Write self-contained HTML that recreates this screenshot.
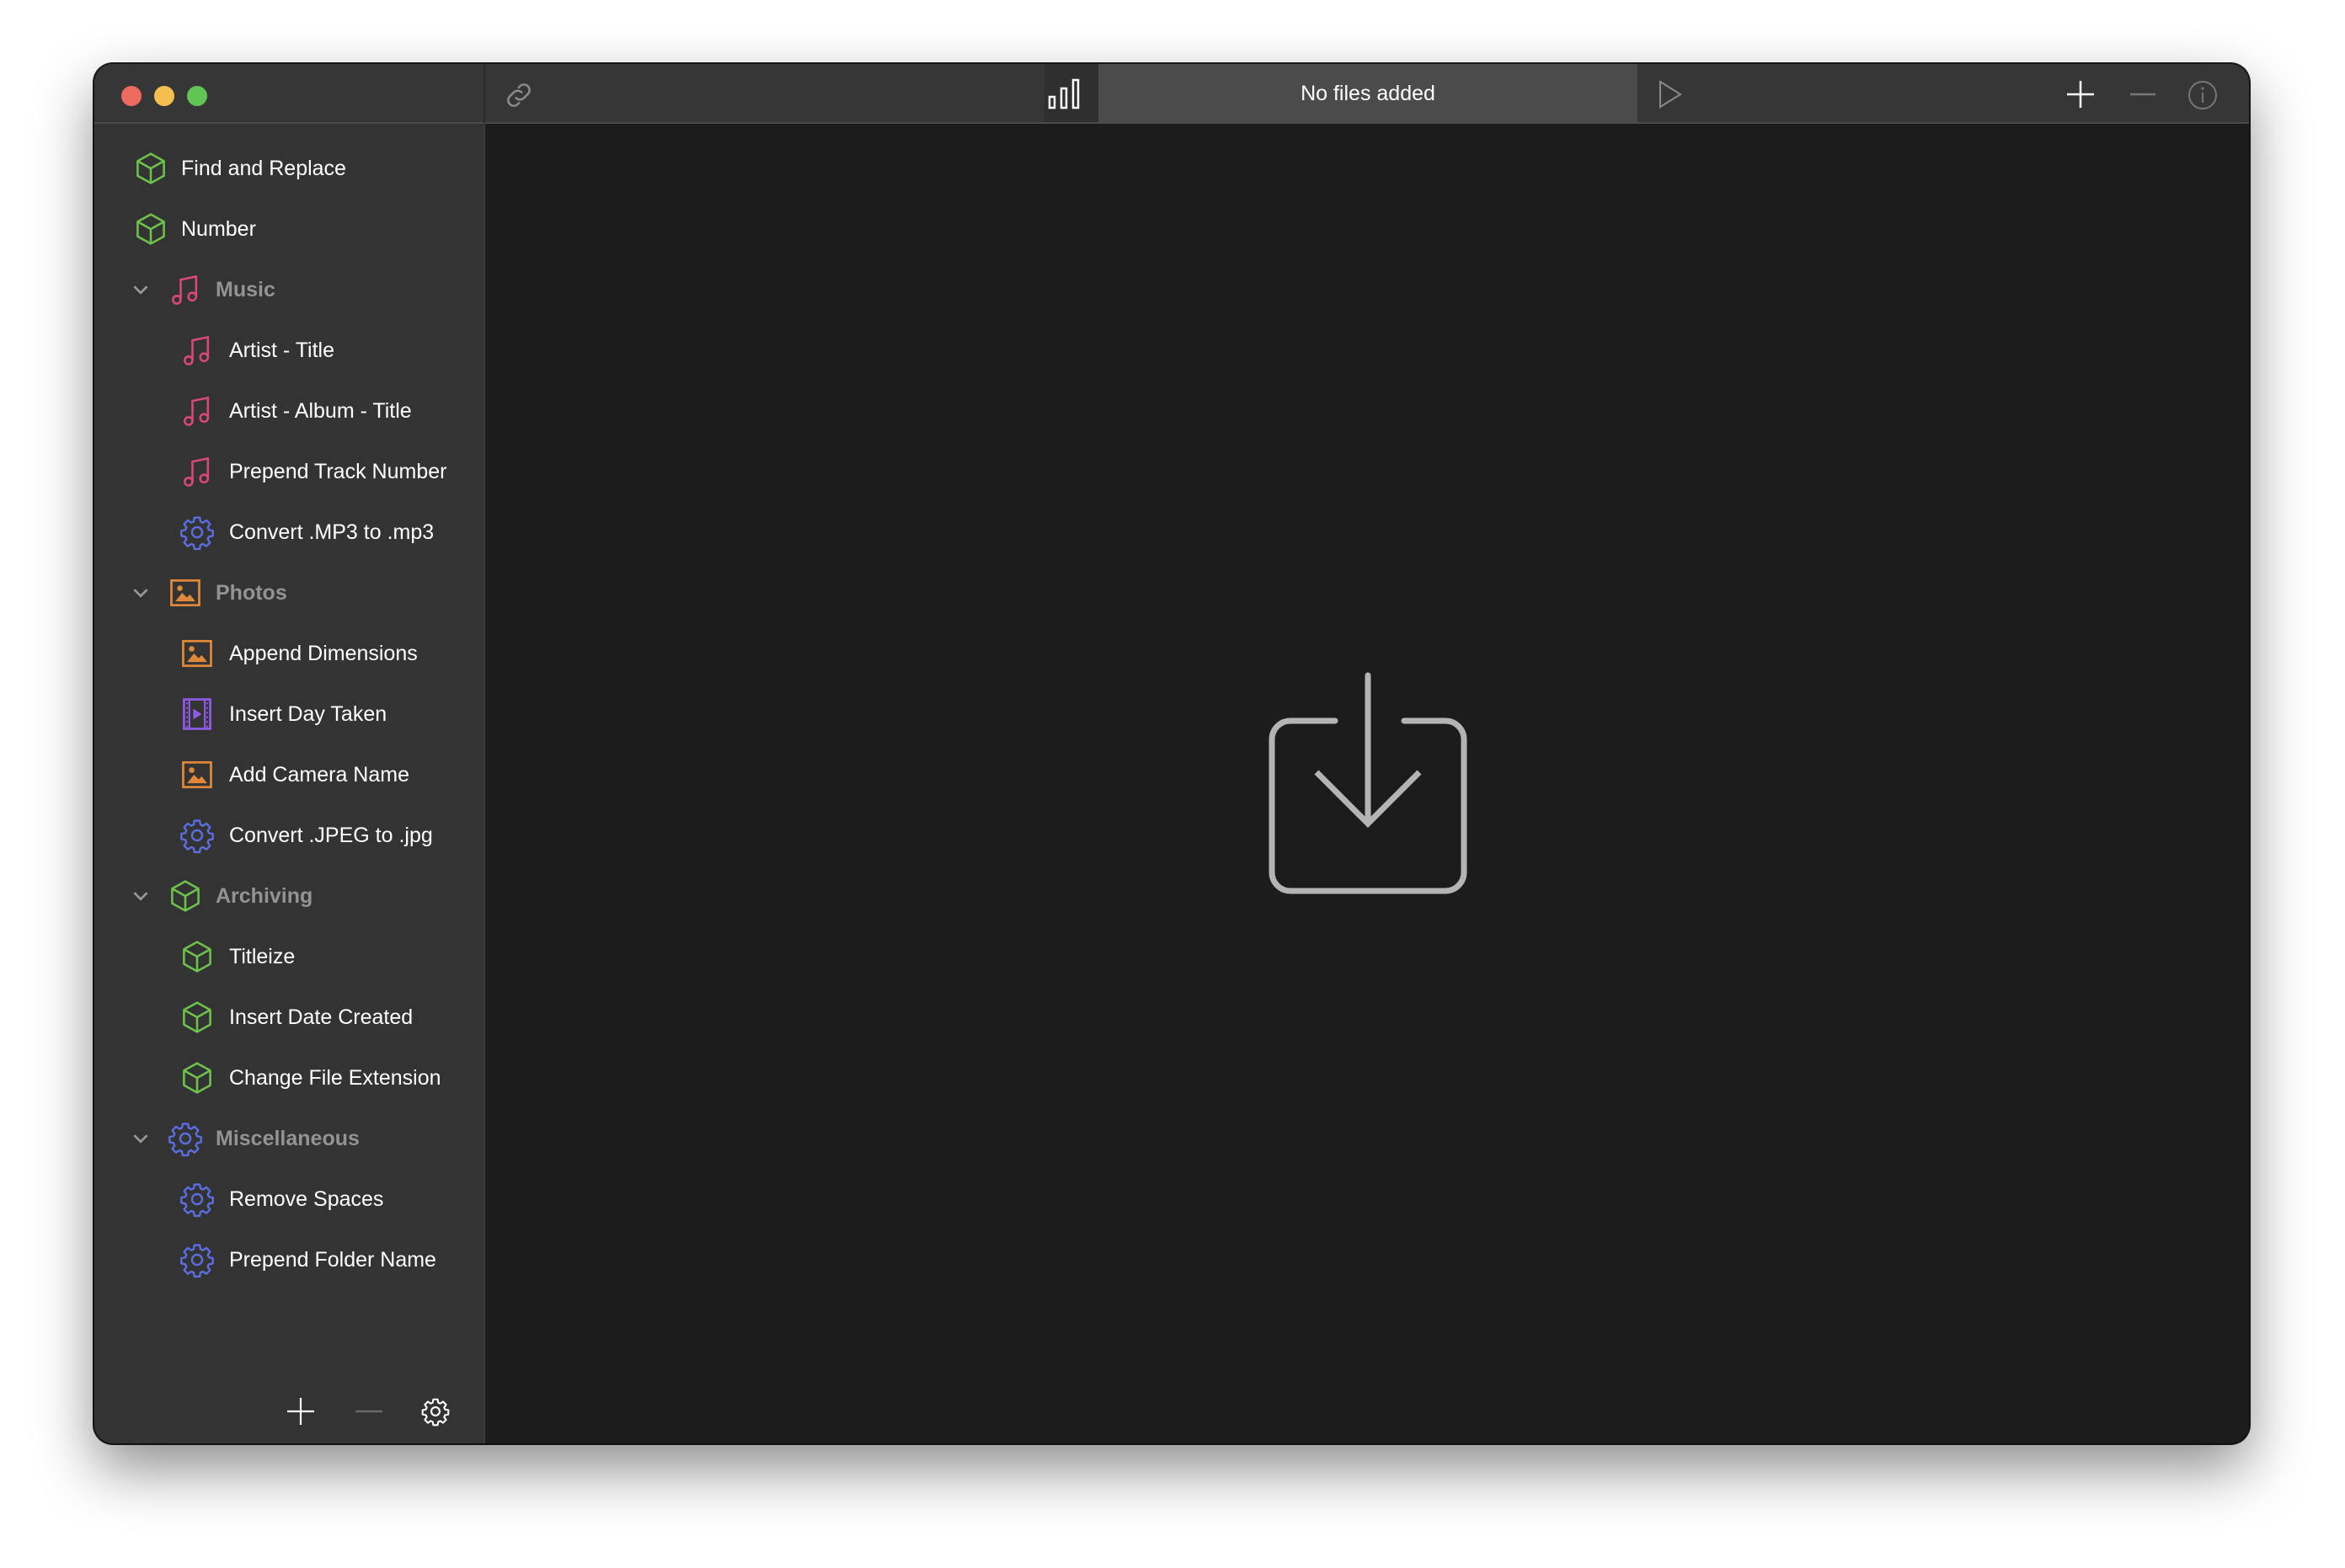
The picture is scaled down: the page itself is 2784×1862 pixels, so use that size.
<!DOCTYPE html>
<html><head><meta charset="utf-8"><style>
html,body{margin:0;padding:0;background:#fff;width:2784px;height:1862px;overflow:hidden;font-family:"Liberation Sans",sans-serif}
.win{position:absolute;left:112px;top:76px;width:2558px;height:1638px;border-radius:22px;background:#1c1c1c;overflow:hidden;box-shadow:0 30px 70px rgba(0,0,0,.45),0 0 0 2px #1a1a1a}
.tb{position:absolute;left:0;top:0;width:100%;height:69px;background:#363636;border-bottom:2px solid #4a4a4a}
.side{position:absolute;left:0;top:71px;width:462px;bottom:0;background:#333;border-right:2px solid #3c3c3c}
.sdiv{position:absolute;left:462px;top:0;width:2px;height:71px;background:#2a2a2a}
.dot{position:absolute;top:26px;width:24px;height:24px;border-radius:50%}
.row{position:absolute;height:40px;font-size:25px;line-height:40px;color:#fff;white-space:nowrap}
.row svg{position:absolute;top:0;left:0}
.ico{position:absolute;width:44px;height:44px;margin:-2px 0 0 -2px}
.hdr{color:#939393;font-weight:bold}
</style></head><body>
<svg width="0" height="0" style="position:absolute">
<defs>
<symbol id="cube" viewBox="0 0 24 24"><path d="M12 2.5L20.5 7.2V16.8L12 21.5L3.5 16.8V7.2Z M3.5 7.2L12 12L20.5 7.2 M12 12V21.5" fill="none" stroke="#6cc24a" stroke-width="1.4" stroke-linejoin="round"/></symbol>
<symbol id="music" viewBox="0 0 24 24"><g fill="none" stroke="#d9487a" stroke-width="1.4"><path d="M9 18.5V5.5L19 3.5V16.5"/><circle cx="6.5" cy="18.5" r="2.5"/><circle cx="16.5" cy="16.5" r="2.5"/></g></symbol>
<symbol id="photo" viewBox="0 0 24 24"><rect x="3" y="4" width="18" height="16" fill="none" stroke="#e0883a" stroke-width="1.5"/><circle cx="8.5" cy="9" r="1.8" fill="#e0883a"/><path d="M5.5 17.5L10 12L13 15L15 13L18.5 17.5Z" fill="#e0883a"/></symbol>
<symbol id="video" viewBox="0 0 24 24"><rect x="3.5" y="2.5" width="17" height="19" fill="none" stroke="#8f5ae6" stroke-width="1.5"/><path d="M7 3V21M17 3V21" stroke="#8f5ae6" stroke-width="1.2"/><path d="M5 5h1M5 8h1M5 11h1M5 14h1M5 17h1M5 20h1M18 5h1M18 8h1M18 11h1M18 14h1M18 17h1M18 20h1" stroke="#8f5ae6" stroke-width="1.2"/><path d="M9.5 8.5L15 12L9.5 15.5Z" fill="#8f5ae6"/></symbol>
<symbol id="gear" viewBox="0 0 24 24"><g fill="none" stroke="#5b6fe3" stroke-width="1.3"><path d="M10.3 2.5h3.4l.5 2.6 1.6.7 2.2-1.5 2.4 2.4-1.5 2.2.7 1.6 2.6.5v3.4l-2.6.5-.7 1.6 1.5 2.2-2.4 2.4-2.2-1.5-1.6.7-.5 2.6h-3.4l-.5-2.6-1.6-.7-2.2 1.5-2.4-2.4 1.5-2.2-.7-1.6-2.6-.5v-3.4l2.6-.5.7-1.6-1.5-2.2 2.4-2.4 2.2 1.5 1.6-.7Z" stroke-linejoin="round"/><circle cx="12" cy="12" r="3.3"/></g></symbol>
<symbol id="chev" viewBox="0 0 24 24"><path d="M5 8.5L12 15.5L19 8.5" fill="none" stroke="#9a9a9a" stroke-width="2.4"/></symbol>
</defs></svg>

<div class="win">
 <div class="tb"></div>
 <div class="sdiv"></div>
 <div class="dot" style="left:32px;background:#ed6a5e"></div>
 <div class="dot" style="left:71px;background:#f4bf4f"></div>
 <div class="dot" style="left:110px;background:#61c554"></div>
 <svg style="position:absolute;left:484px;top:17px" width="40" height="40" viewBox="0 0 24 24"><g fill="none" stroke="#8a8a8a" stroke-width="1.5" stroke-linecap="round"><path d="M10 14a4 4 0 0 0 5.6 0l3.2-3.2a4 4 0 0 0-5.6-5.6l-1.3 1.3"/><path d="M14 10a4 4 0 0 0-5.6 0l-3.2 3.2a4 4 0 0 0 5.6 5.6l1.3-1.3"/></g></svg>
 <div style="position:absolute;left:1128px;top:0;width:64px;height:69px;background:#2f2f2f"></div>
 <svg style="position:absolute;left:1131px;top:16px" width="44" height="40" viewBox="0 0 44 40"><g fill="none" stroke="#fff" stroke-width="2.5"><rect x="3" y="23" width="6" height="13"/><rect x="17" y="13" width="6" height="23"/><rect x="31" y="3" width="6" height="33"/></g></svg>
 <div style="position:absolute;left:1192px;top:0;width:640px;height:69px;background:#4b4b4b;color:#fff;font-size:25px;line-height:71px;text-align:center">No files added</div>
 <svg style="position:absolute;left:1856px;top:19px" width="30" height="34" viewBox="0 0 30 34"><path d="M3 2L27 17L3 32Z" fill="none" stroke="#8a8a8a" stroke-width="2"/></svg>
 <svg style="position:absolute;left:2340px;top:18px" width="36" height="36" viewBox="0 0 36 36"><path d="M18 2V34M2 18H34" stroke="#fff" stroke-width="2.5"/></svg>
 <svg style="position:absolute;left:2415px;top:18px" width="34" height="36" viewBox="0 0 34 36"><path d="M2 18H32" stroke="#777" stroke-width="2.5"/></svg>
 <svg style="position:absolute;left:2484px;top:18px" width="38" height="38" viewBox="0 0 38 38"><circle cx="19" cy="19" r="16" fill="none" stroke="#777" stroke-width="2"/><path d="M19 16V28" stroke="#777" stroke-width="2"/><circle cx="19" cy="11" r="1.6" fill="#777"/></svg>

 <div class="side">
  <div class="row" style="left:47px;top:33px"><svg class="ico"><use href="#cube"/></svg><span style="margin-left:56px">Find and Replace</span></div>
  <div class="row" style="left:47px;top:105px"><svg class="ico"><use href="#cube"/></svg><span style="margin-left:56px">Number</span></div>

  <div class="row hdr" style="left:42px;top:177px"><svg width="26" height="40" viewBox="0 0 24 37" style="left:0"><use href="#chev"/></svg><svg class="ico" style="left:46px"><use href="#music"/></svg><span style="margin-left:102px">Music</span></div>
  <div class="row" style="left:102px;top:249px"><svg class="ico"><use href="#music"/></svg><span style="margin-left:58px">Artist - Title</span></div>
  <div class="row" style="left:102px;top:321px"><svg class="ico"><use href="#music"/></svg><span style="margin-left:58px">Artist - Album - Title</span></div>
  <div class="row" style="left:102px;top:393px"><svg class="ico"><use href="#music"/></svg><span style="margin-left:58px">Prepend Track Number</span></div>
  <div class="row" style="left:102px;top:465px"><svg class="ico"><use href="#gear"/></svg><span style="margin-left:58px">Convert .MP3 to .mp3</span></div>

  <div class="row hdr" style="left:42px;top:537px"><svg width="26" height="40" viewBox="0 0 24 37" style="left:0"><use href="#chev"/></svg><svg class="ico" style="left:46px"><use href="#photo"/></svg><span style="margin-left:102px">Photos</span></div>
  <div class="row" style="left:102px;top:609px"><svg class="ico"><use href="#photo"/></svg><span style="margin-left:58px">Append Dimensions</span></div>
  <div class="row" style="left:102px;top:681px"><svg class="ico"><use href="#video"/></svg><span style="margin-left:58px">Insert Day Taken</span></div>
  <div class="row" style="left:102px;top:753px"><svg class="ico"><use href="#photo"/></svg><span style="margin-left:58px">Add Camera Name</span></div>
  <div class="row" style="left:102px;top:825px"><svg class="ico"><use href="#gear"/></svg><span style="margin-left:58px">Convert .JPEG to .jpg</span></div>

  <div class="row hdr" style="left:42px;top:897px"><svg width="26" height="40" viewBox="0 0 24 37" style="left:0"><use href="#chev"/></svg><svg class="ico" style="left:46px"><use href="#cube"/></svg><span style="margin-left:102px">Archiving</span></div>
  <div class="row" style="left:102px;top:969px"><svg class="ico"><use href="#cube"/></svg><span style="margin-left:58px">Titleize</span></div>
  <div class="row" style="left:102px;top:1041px"><svg class="ico"><use href="#cube"/></svg><span style="margin-left:58px">Insert Date Created</span></div>
  <div class="row" style="left:102px;top:1113px"><svg class="ico"><use href="#cube"/></svg><span style="margin-left:58px">Change File Extension</span></div>

  <div class="row hdr" style="left:42px;top:1185px"><svg width="26" height="40" viewBox="0 0 24 37" style="left:0"><use href="#chev"/></svg><svg class="ico" style="left:46px"><use href="#gear"/></svg><span style="margin-left:102px">Miscellaneous</span></div>
  <div class="row" style="left:102px;top:1257px"><svg class="ico"><use href="#gear"/></svg><span style="margin-left:58px">Remove Spaces</span></div>
  <div class="row" style="left:102px;top:1329px"><svg class="ico"><use href="#gear"/></svg><span style="margin-left:58px">Prepend Folder Name</span></div>

  <svg style="position:absolute;left:228px;top:1512px" width="34" height="34" viewBox="0 0 34 34"><path d="M17 1V33M1 17H33" stroke="#fff" stroke-width="2.2"/></svg>
  <svg style="position:absolute;left:309px;top:1512px" width="34" height="34" viewBox="0 0 34 34"><path d="M1 17H33" stroke="#6a6a6a" stroke-width="2.5"/></svg>
  <svg style="position:absolute;left:387px;top:1511px" width="36" height="36" viewBox="0 0 24 24"><g fill="none" stroke="#fff" stroke-width="1.4"><path d="M10.3 2.5h3.4l.5 2.6 1.6.7 2.2-1.5 2.4 2.4-1.5 2.2.7 1.6 2.6.5v3.4l-2.6.5-.7 1.6 1.5 2.2-2.4 2.4-2.2-1.5-1.6.7-.5 2.6h-3.4l-.5-2.6-1.6-.7-2.2 1.5-2.4-2.4 1.5-2.2-.7-1.6-2.6-.5v-3.4l2.6-.5.7-1.6-1.5-2.2 2.4-2.4 2.2 1.5 1.6-.7Z" stroke-linejoin="round"/><circle cx="12" cy="12" r="3.3"/></g></svg>
 </div>

 <svg style="position:absolute;left:1388px;top:716px" width="250" height="276" viewBox="0 0 250 276">
  <g fill="none" stroke="#b4b4b4" stroke-width="7" stroke-linecap="round" stroke-linejoin="miter">
   <path d="M85 64H32a22 22 0 0 0-22 22V244a22 22 0 0 0 22 22H216a22 22 0 0 0 22-22V86a22 22 0 0 0-22-22H167"/>
   <path d="M124 10V184"/>
   <path d="M63 125L124 186L185 125" stroke-linecap="butt"/>
  </g>
 </svg>
</div>
</body></html>
